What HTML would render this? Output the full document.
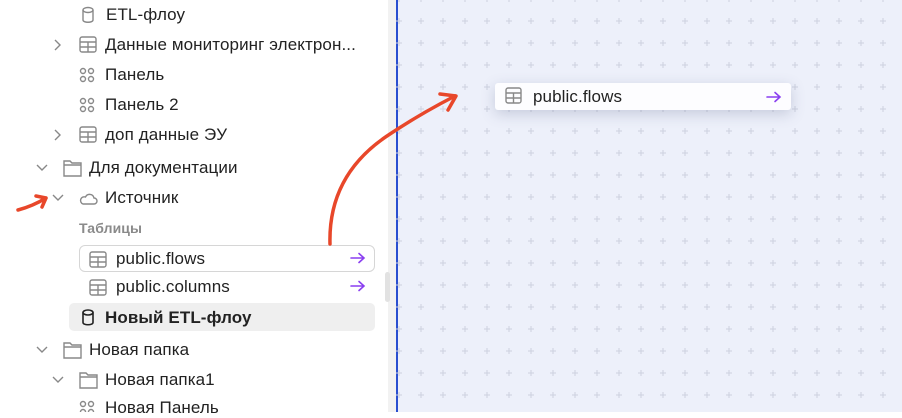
<!DOCTYPE html>
<html><head><meta charset="utf-8"><style>
*{margin:0;padding:0;box-sizing:border-box}
body{width:902px;height:412px;overflow:hidden;position:relative;background:#fff;font-family:"Liberation Sans",sans-serif;color:#222}
.side{position:absolute;left:0;top:0;width:388px;height:412px;background:#fff}
.strip{position:absolute;left:388px;top:0;width:8px;height:412px;background:#f2f2f2}
.canvas{position:absolute;left:396px;top:0;width:506px;height:412px;background:#edf0fa;border-left:2px solid #2a4fd0}
.row{position:absolute;font-size:17px;line-height:20px;white-space:nowrap;letter-spacing:0.1px}
</style></head><body>
<div class="side">
<svg width="388" height="412" style="position:absolute;left:0;top:0" fill="none" stroke="#888" stroke-width="1.4">
<ellipse cx="88" cy="10" rx="5" ry="2.5"/><path d="M83 10v10c0 3 10 3 10 0V10"/>
<path d="M55 40l5 5-5 5M55 130l5 5-5 5"/>
<path d="M37 165l5 5 5-5M53 195l5 5 5-5M37 347l5 5 5-5M53 377l5 5 5-5"/>
<rect x="80" y="37" width="16" height="15" rx="2"/><path d="M80 42h16M80 47h16M88 42v10"/>
<rect x="80" y="127" width="16" height="15" rx="2"/><path d="M80 132h16M80 137h16M88 132v10"/>
<rect x="90" y="252" width="16" height="15" rx="2"/><path d="M90 257h16M90 262h16M98 257v10"/>
<rect x="90" y="280" width="16" height="15" rx="2"/><path d="M90 285h16M90 290h16M98 285v10"/>
<circle cx="83" cy="71" r="2.5"/><circle cx="91" cy="71" r="2.5"/><circle cx="83" cy="79" r="2.5"/><circle cx="91" cy="79" r="2.5"/>
<circle cx="83" cy="101" r="2.5"/><circle cx="91" cy="101" r="2.5"/><circle cx="83" cy="109" r="2.5"/><circle cx="91" cy="109" r="2.5"/>
<circle cx="83" cy="404" r="2.5"/><circle cx="91" cy="404" r="2.5"/><circle cx="83" cy="412" r="2.5"/><circle cx="91" cy="412" r="2.5"/>
<path d="M64 161h6l2 2h9v13H64z"/><path d="M64 165h17"/>
<path d="M64 343h6l2 2h9v13H64z"/><path d="M64 347h17"/>
<path d="M80 373h6l2 2h9v13H80z"/><path d="M80 377h17"/>
<path d="M83 204h11a3 3 0 0 0 0-6 4.5 4.5 0 0 0-8.5-1 3.5 3.5 0 0 0-2.5 7z"/>
</svg>
<div style="position:absolute;left:79px;top:245px;width:296px;height:27px;border:1px solid #d6d6d6;border-radius:6px"></div>
<div style="position:absolute;left:69px;top:303px;width:306px;height:28px;background:#efefef;border-radius:5px"></div>
<svg width="16" height="40" style="position:absolute;left:80px;top:309px" fill="none" stroke="#222" stroke-width="1.6"><ellipse cx="8" cy="3.5" rx="5" ry="2.5"/><path d="M3 3.5v10c0 3 10 3 10 0v-10"/></svg>
<div class="row" style="left:106px;top:5px">ETL-флоу</div>
<div class="row" style="left:105px;top:35px">Данные мониторинг электрон...</div>
<div class="row" style="left:105px;top:65px">Панель</div>
<div class="row" style="left:105px;top:95px">Панель 2</div>
<div class="row" style="left:105px;top:125px">доп данные ЭУ</div>
<div class="row" style="left:89px;top:158px">Для документации</div>
<div class="row" style="left:105px;top:188px">Источник</div>
<div class="row" style="left:79px;top:218px;font-size:14px;font-weight:bold;color:#8a8a8a">Таблицы</div>
<div class="row" style="left:116px;top:249px">public.flows</div>
<div class="row" style="left:116px;top:277px">public.columns</div>
<div class="row" style="left:105px;top:308px;font-weight:bold">Новый ETL-флоу</div>
<div class="row" style="left:89px;top:340px">Новая папка</div>
<div class="row" style="left:105px;top:370px">Новая папка1</div>
<div class="row" style="left:105px;top:398px">Новая Панель</div>
<svg width="16" height="12" style="position:absolute;left:350px;top:252px" fill="none" stroke="#8a3ff0" stroke-width="1.6" stroke-linecap="round"><path d="M1 6h13M9 1.5l5 4.5-5 4.5"/></svg>
<svg width="16" height="12" style="position:absolute;left:350px;top:280px" fill="none" stroke="#8a3ff0" stroke-width="1.6" stroke-linecap="round"><path d="M1 6h13M9 1.5l5 4.5-5 4.5"/></svg>
</div>
<div class="strip"><div style="position:absolute;left:-3px;top:272px;width:5px;height:30px;background:#e2e2e2;border-radius:3px"></div></div>
<div class="canvas">
<svg width="506" height="412" style="position:absolute;left:-2px;top:0">
<defs><pattern id="g" width="22" height="22" patternUnits="userSpaceOnUse" x="3" y="10"><path d="M22 8v6M19 11h6M0 8v6M-3 11h6" stroke="#cdd1df" stroke-width="1"/></pattern></defs>
<rect width="506" height="412" fill="url(#g)"/>
</svg>
</div>
<div style="position:absolute;left:495px;top:83px;width:296px;height:27px;background:#fdfdff;border-radius:3px;box-shadow:0 4px 14px rgba(80,90,130,.25)">
<svg width="18" height="18" style="position:absolute;left:10px;top:4px" fill="none" stroke="#888" stroke-width="1.4"><rect x="1" y="1" width="15" height="15" rx="2"/><path d="M1 6h15M1 11h15M8.5 6v10"/></svg>
<div class="row" style="left:38px;top:4px">public.flows</div>
<svg width="16" height="12" style="position:absolute;left:271px;top:8px" fill="none" stroke="#8a3ff0" stroke-width="1.6" stroke-linecap="round"><path d="M1 6h13M9 1.5l5 4.5-5 4.5"/></svg>
</div>
<svg width="902" height="412" style="position:absolute;left:0;top:0" fill="none" stroke="#e8472a" stroke-width="3.5" stroke-linecap="round" stroke-linejoin="round">
<path d="M18 210q15-4 28-12M36 196l10 2-4 9"/>
<path d="M330 244q-2-70 60-110q30-20 65-38"/>
<path d="M440 94l16 2-8 14"/>
</svg>
</body></html>
